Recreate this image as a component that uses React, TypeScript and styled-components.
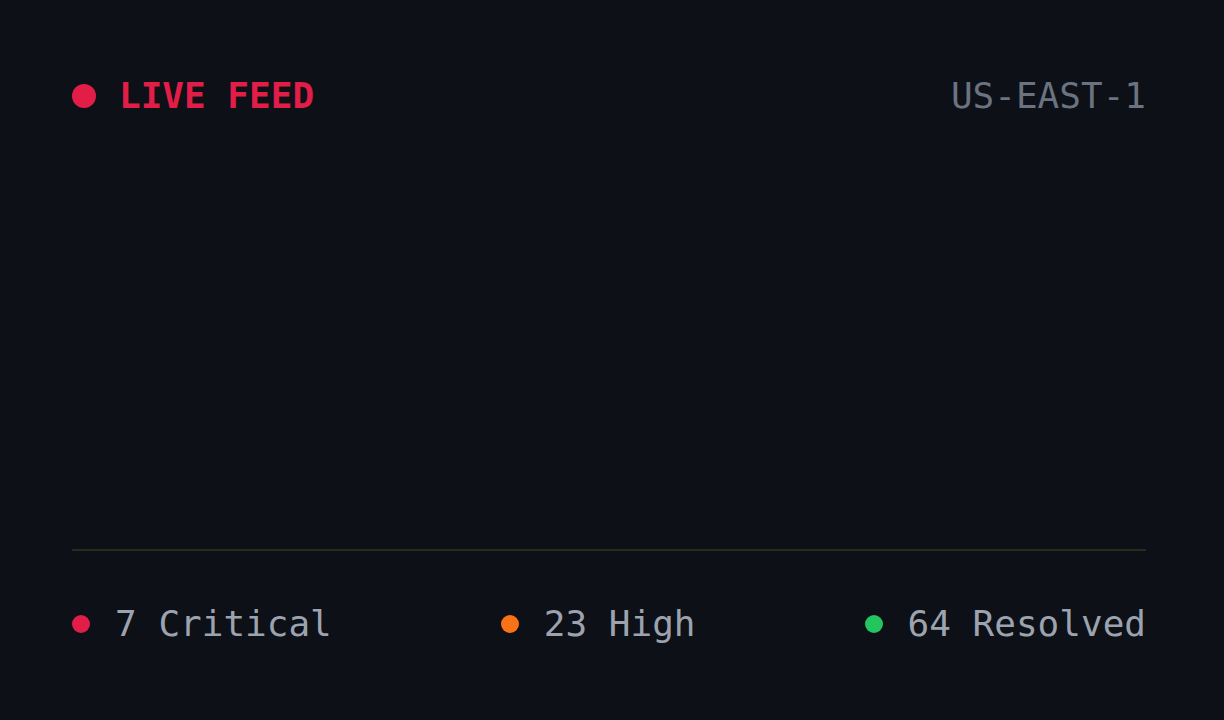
import { createGlobalStyle, styled } from "styled-components";

const GlobalStyle = createGlobalStyle`
  html, body {
    margin: 0;
    padding: 0;
    background: #0d1017;
  }
  * {
    box-sizing: border-box;
  }
`;

const Panel = styled.section`
  display: flex;
  flex-direction: column;
  height: 720px;
  padding: 74px 78px 74px 72px;
  background: #0d1017;
  font-family: "DejaVu Sans Mono", "Liberation Mono", monospace;
  font-size: 36px;
  line-height: 44px;
`;

const Header = styled.header`
  display: flex;
  align-items: center;
  justify-content: space-between;
`;

const LiveLabel = styled.div`
  display: flex;
  align-items: center;
  gap: 23px;
  color: #e11d48;
  font-weight: 700;
`;

const Dot = styled.span<{ $color: string; $size: number }>`
  display: block;
  flex: none;
  width: ${(p) => p.$size}px;
  height: ${(p) => p.$size}px;
  border-radius: 50%;
  background: ${(p) => p.$color};
`;

const Region = styled.div`
  color: #6b7280;
`;

const Feed = styled.div`
  flex: 1;
`;

const Divider = styled.hr`
  margin: 0;
  border: none;
  height: 2px;
  background: #2c2a1f;
`;

const Stats = styled.ul`
  display: flex;
  justify-content: space-between;
  align-items: center;
  margin: 51px 0 0;
  padding: 0;
  list-style: none;
`;

const Stat = styled.li`
  display: flex;
  align-items: center;
  gap: 25px;
  color: #9ca3af;
`;

interface IStat {
  count: number;
  label: string;
  color: string;
}

const stats: IStat[] = [
  { count: 7, label: "Critical", color: "#e11d48" },
  { count: 23, label: "High", color: "#f97316" },
  { count: 64, label: "Resolved", color: "#22c55e" },
];

const App = () => {
  return (
    <>
      <GlobalStyle />
      <Panel>
        <Header>
          <LiveLabel>
            <Dot $color="#e11d48" $size={24} />
            LIVE FEED
          </LiveLabel>
          <Region>US-EAST-1</Region>
        </Header>
        <Feed />
        <Divider />
        <Stats>
          {stats.map((stat) => (
            <Stat key={stat.label}>
              <Dot $color={stat.color} $size={18} />
              {stat.count} {stat.label}
            </Stat>
          ))}
        </Stats>
      </Panel>
    </>
  );
};

export default App;
